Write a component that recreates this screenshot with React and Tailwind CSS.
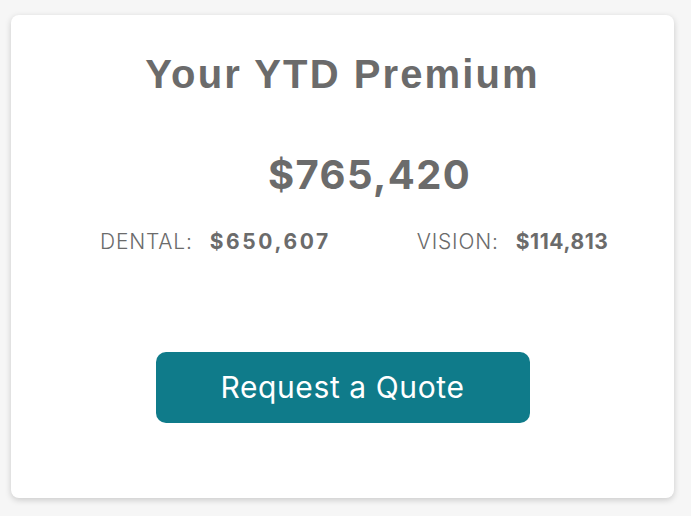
export default function App() {
  return (
    <div className="min-h-[516px] w-full bg-[#f6f6f6] pt-[15px] pl-[11px] pr-[17px]" style={{ fontFamily: '"Liberation Sans", Arial, sans-serif' }}>
      <div className="h-[483px] w-[663px] rounded-[8px] bg-white shadow-[0_2px_6px_rgba(0,0,0,0.18)] flex flex-col text-[#6b6b6b]">
        <h1 className="mt-[39px] text-center text-[40px] leading-[40px] font-bold tracking-[2.1px]">Your YTD Premium</h1>
        <div className="mt-[61px] pl-[54px] text-center text-[40px] leading-[40px] font-bold tracking-[1.4px]" style={{ fontFamily: 'Inter, sans-serif' }}>$765,420</div>
        <div className="mt-[35px] flex items-center pl-[89px] text-[21px] leading-[24px]" style={{ fontFamily: 'Inter, sans-serif' }}>
          <div className="flex items-center gap-[17px]">
            <span className="font-light tracking-[0.8px]">DENTAL:</span>
            <span className="font-bold tracking-[2.6px]">$650,607</span>
          </div>
          <div className="ml-[86px] flex items-center gap-[17px]">
            <span className="font-light tracking-[0.8px]">VISION:</span>
            <span className="font-bold tracking-[0.6px]">$114,813</span>
          </div>
        </div>
        <div className="mt-[98px] flex justify-center">
          <button className="h-[71px] w-[374px] rounded-[10px] bg-[#0f7b8a] text-white text-[30px] tracking-[0.6px]" style={{ fontFamily: 'Inter, sans-serif' }}>
            Request a Quote
          </button>
        </div>
      </div>
    </div>
  );
}
